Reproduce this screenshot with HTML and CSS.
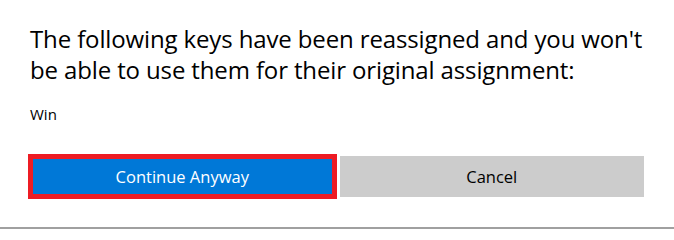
FILE: index.html
```html
<!DOCTYPE html>
<html lang="en">
<head>
<meta charset="utf-8">
<link rel="stylesheet" href="styles.css">
</head>
<body>
<div class="page">
  <p class="title">The following keys have been reassigned and you won't be able to use them for their original assignment:</p>
  <p class="key">Win</p>
  <div class="actions">
    <button class="btn primary">Continue Anyway</button>
    <button class="btn secondary">Cancel</button>
  </div>
</div>
</body>
</html>
```
FILE: styles.css
```css
html, body {
  margin: 0;
  padding: 0;
  background: #ffffff;
}
.page {
  box-sizing: border-box;
  height: 229px;
  padding: 23px 30px 0 30px;
  border-bottom: 2px solid #a0a0a0;
  font-family: "Open Sans", "Noto Sans", sans-serif;
  color: #000000;
}
.title {
  margin: 0;
  width: 620px;
  font-size: 24px;
  line-height: 31px;
  letter-spacing: -0.13px;
}
.key {
  margin: 19px 0 0 0;
  font-size: 15px;
  line-height: 20px;
}
.actions {
  display: flex;
  gap: 5px;
  margin-top: 32px;
}
.btn {
  width: 305px;
  height: 41px;
  border: 0;
  padding: 0;
  font-family: inherit;
  font-size: 16.5px;
}
.primary {
  background: #0078d7;
  color: #ffffff;
  outline: 5px solid #ed1c24;
  outline-offset: -3px;
}
.secondary {
  background: #cccccc;
  color: #000000;
}
```
